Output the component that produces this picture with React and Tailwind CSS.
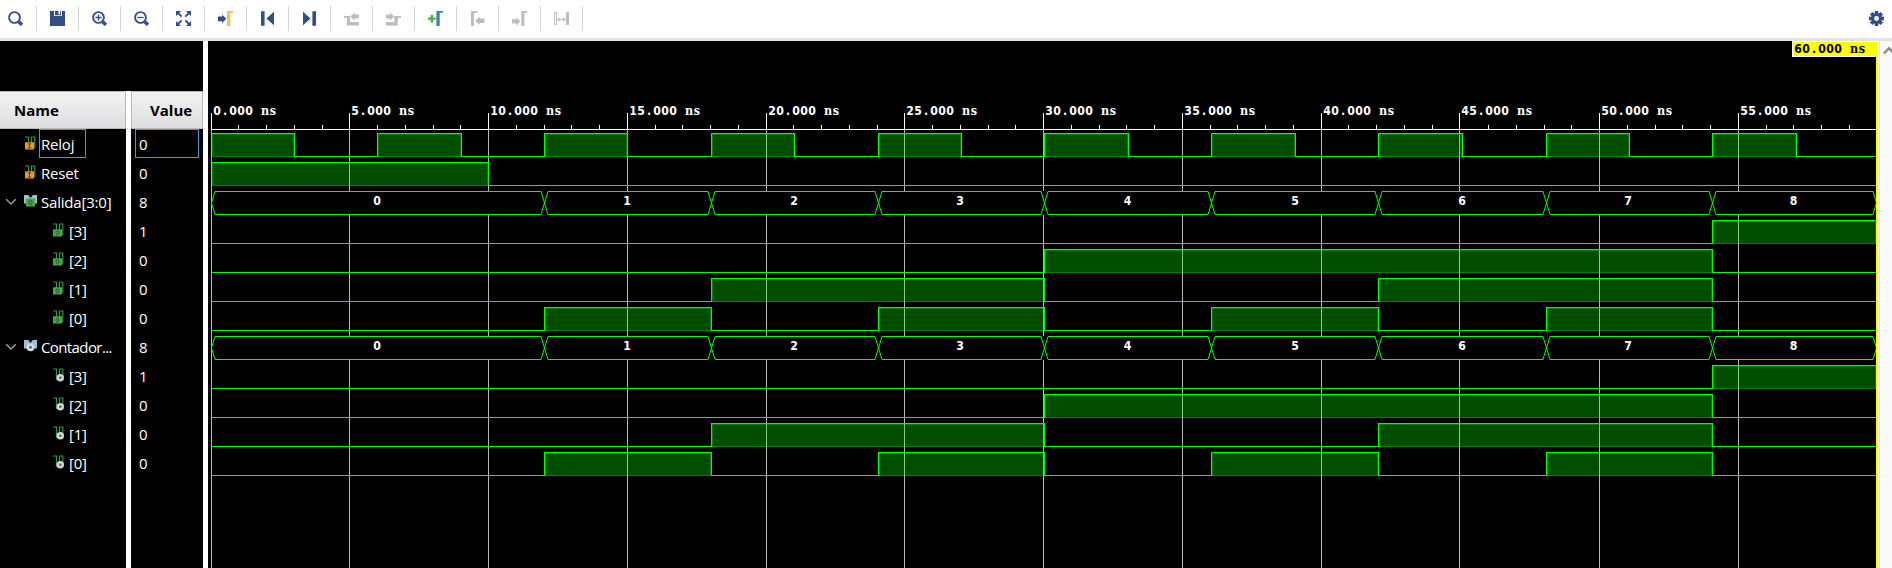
import React from "react";

const NAVY = "#314f85";
const GREY = "#bdbdbd";

const Magnifier = ({ children }) => (
  <>
    <circle cx="6.5" cy="6.5" r="5.4" fill="none" stroke={NAVY} strokeWidth="1.9" />
    <path d="M10.8 10.8L13.9 13.9" stroke={NAVY} strokeWidth="3.4" />
    {children}
  </>
);

const TOOL_ICONS = [
  <Magnifier />,
  <path fill={NAVY} fillRule="evenodd" d="M0 0H4V5H12V0H15V15H0Z M5 0H8.4V3.2H10.2V0H11V4.2H5Z" />,
  <Magnifier>
    <path d="M3.4 6.5H9.6M6.5 3.4V9.6" stroke={NAVY} strokeWidth="1.3" />
  </Magnifier>,
  <Magnifier>
    <path d="M3.4 6.5H9.6" stroke={NAVY} strokeWidth="1.3" />
  </Magnifier>,
  <>
    <path fill={NAVY} d="M0 0H5L0 5ZM15 0V5L10 0ZM0 15V10L5 15ZM15 15H10L15 10Z" />
    <path stroke={NAVY} strokeWidth="1.9" d="M1.5 1.5L5.6 5.6M13.5 1.5L9.4 5.6M1.5 13.5L5.6 9.4M13.5 13.5L9.4 9.4" />
  </>,
  <>
    <path fill={NAVY} d="M0 5.5H4V3.7L8.3 7.8L4 12V10.2H0Z" />
    <path fill="#e3c763" d="M9 0H15V2H12.4V15H9Z" />
  </>,
  <path fill={NAVY} d="M1 .3H4.6V14.7H1ZM14 .8V14.2L6.4 7.5Z" />,
  <path fill={NAVY} d="M1 .8L8.6 7.5L1 14.2ZM10.4 .3H14V14.7H10.4Z" />,
  <path fill={GREY} d="M0 5H6V11H15V14.5H2.8V6.8H0ZM6.3 5.5L10.5 1.4V3.4H15V7.6H10.5V9.5Z" />,
  <path fill={GREY} d="M0 11H8.3V5H15V6.8H11.8V14.5H0ZM0 3.4H4V1.4L8.2 5.5L4 9.5V7.6H0Z" />,
  <>
    <path fill="#45b04c" d="M2.7 3.8H5V6.5H7.7V8.7H5V11.5H2.7V8.7H0V6.5H2.7Z" />
    <path fill="#3a82b2" d="M8.4 0H15V1.8H11.7V15H8.4Z" />
  </>,
  <path fill={GREY} d="M1 0H7.2V1.7H4V15H1ZM5.3 9.8L9.7 5.6V7.6H14.4V12H9.7V14Z" />,
  <path fill={GREY} d="M9.3 0H15V1.7H12.4V15H9.3ZM0 8.2H4.2V6.2L8.4 10.3L4.2 14.5V12.5H0Z" />,
  <>
    <path fill="none" stroke={GREY} strokeWidth="1" d="M.5 1.5H2.5V13.5H.5Z" />
    <path fill={GREY} d="M12 1H15V14H12ZM3 8.5L5.6 6V8H9.2V6L11.8 8.5L9.2 11V9H5.6V11Z" />
  </>,
];

const GearIcon = () => (
  <svg width="15" height="15" viewBox="0 0 15 15">
    <g fill={NAVY}>
      {[0, 45, 90, 135].map((a) => (
        <rect key={a} x="5.7" y="0" width="3.6" height="15" transform={`rotate(${a} 7.5 7.5)`} />
      ))}
      <circle cx="7.5" cy="7.5" r="5.4" />
    </g>
    <circle cx="7.5" cy="7.5" r="2.4" fill="#fff" />
  </svg>
);

const Pulse = () => (
  <path d="M0 1H3.5V12M6.5 11V1H9.8V12" fill="none" stroke="#319447" strokeWidth="1.2" />
);

const SignalIcon = ({ kind }) => (
  <svg width="13" height="15" viewBox="0 0 13 15" className="block shrink-0">
    {kind === "input" && (
      <>
        <Pulse />
        <rect x="0" y="6.3" width="9" height="7.2" fill="#f0932b" />
        <path d="M2.8 7.8H6.2M4.5 7.8V12M2.8 12H6.2" stroke="#5f3b10" strokeWidth="1" />
      </>
    )}
    {kind === "output" && (
      <>
        <Pulse />
        <rect x="0" y="6.3" width="9" height="7.2" fill="#4ca64c" />
        <ellipse cx="4.5" cy="9.9" rx="1.5" ry="2.2" fill="none" stroke="#1f5a25" strokeWidth="1" />
      </>
    )}
    {kind === "reg" && (
      <>
        <Pulse />
        <circle cx="7.3" cy="9.8" r="3.7" fill="#d5d5d5" />
        <circle cx="7.3" cy="9.8" r="1.3" fill="#606060" />
      </>
    )}
    {kind === "outbus" && (
      <>
        <path d="M0 1H4.2L6.5 4L8.8 1H13V9.5H0Z" fill="#9bc0d8" />
        <rect x="1.8" y="4.5" width="9.4" height="8" rx="1" fill="#4ca64c" />
        <ellipse cx="6.5" cy="8.4" rx="1.5" ry="2.2" fill="none" stroke="#1f5a25" strokeWidth="1" />
      </>
    )}
    {kind === "regbus" && (
      <>
        <path d="M0 1H4.2L6.5 4L8.8 1H13V9.5H0Z" fill="#9bc0d8" />
        <circle cx="6.5" cy="8.3" r="3.9" fill="#d9d9d9" />
        <circle cx="6.5" cy="8.3" r="1.4" fill="#606060" />
      </>
    )}
  </svg>
);

const END = 1668;
const RELOJ = [[3, 86], [169, 253], [336, 419], [503, 586], [670, 753], [836, 920], [1003, 1087], [1170, 1254], [1338, 1421], [1504, 1588]];
const BIT3 = [[1504, END]];
const BIT2 = [[836, 1504]];
const BIT1 = [[503, 836], [1170, 1504]];
const BIT0 = [[336, 503], [670, 836], [1003, 1170], [1338, 1504]];
const BUS_EDGES = [3, 336, 503, 670, 836, 1003, 1170, 1338, 1504, END];
const BUS_CENTERS = [169, 419, 586, 752, 919.5, 1087, 1254, 1420, 1585.5];

const SIGNALS = [
  { name: "Reloj", value: "0", kind: "input", high: RELOJ, selected: true },
  { name: "Reset", value: "0", kind: "input", high: [[3, 280]] },
  { name: "Salida[3:0]", value: "8", kind: "outbus" },
  { name: "[3]", value: "1", kind: "output", high: BIT3, child: true },
  { name: "[2]", value: "0", kind: "output", high: BIT2, child: true },
  { name: "[1]", value: "0", kind: "output", high: BIT1, child: true },
  { name: "[0]", value: "0", kind: "output", high: BIT0, child: true },
  { name: "Contador...", value: "8", kind: "regbus" },
  { name: "[3]", value: "1", kind: "reg", high: BIT3, child: true },
  { name: "[2]", value: "0", kind: "reg", high: BIT2, child: true },
  { name: "[1]", value: "0", kind: "reg", high: BIT1, child: true },
  { name: "[0]", value: "0", kind: "reg", high: BIT0, child: true },
];

const MAJOR = [3, 141, 280, 419, 558, 696, 835, 974, 1113, 1251, 1391, 1530];
const MINOR = [
  30, 58, 86, 114, 169, 197, 225, 252, 308, 336, 363, 391, 447, 474, 502, 530, 585, 613, 641, 669, 724, 752, 780, 807,
  863, 891, 918, 946, 1002, 1029, 1057, 1085, 1140, 1168, 1196, 1224, 1280, 1308, 1336, 1363, 1419, 1447, 1474, 1502,
  1558, 1585, 1613, 1641,
];

// Glyphs sit on a fixed 8px pitch; the unit is set in a slab face, the digits in a plain one.
const MonoText = ({ x, y, fill = "#fff", value, unit = "" }) => {
  const cells = (text, from) => [...text].map((_, i) => x + 8 * (from + i)).join(" ");
  return (
    <text y={y} fill={fill} textAnchor="middle" xmlSpace="preserve" className="font-bold">
      <tspan
        x={cells(value, 0)}
        className="font-['DejaVu_Sans_Condensed','DejaVu_Sans',sans-serif] text-[12.2px]"
      >
        {value}
      </tspan>
      {unit && (
        <tspan
          x={cells(unit, value.length + 1)}
          className="font-['DejaVu_Serif_Condensed','DejaVu_Serif',serif] text-[12.5px]"
        >
          {unit}
        </tspan>
      )}
    </text>
  );
};

const BitTrace = ({ high, top }) => {
  const low = top + 23;
  const first = high[0][0];
  let d = first > 3 ? `M3 ${low + 0.5}H${first + 0.5}` : `M3 ${top + 0.5}`;
  high.forEach(([a, b], i) => {
    d += a > 3 ? `V${top + 0.5}` : "";
    d += b < END ? `H${b + 0.5}V${low + 0.5}` : `H${END}`;
    const next = high[i + 1];
    if (b < END) d += `H${next ? next[0] + 0.5 : END}`;
  });
  return (
    <g shapeRendering="crispEdges">
      {high.map(([a, b]) => (
        <g key={a}>
          <rect x={a + 1} y={top + 1} width={b - a - 1} height={23} fill="#00ff00" fillOpacity="0.3" />
          <rect x={a + 1.5} y={top + 1.5} width={b - a - 2} height={22} fill="none" stroke="#00ff00" strokeOpacity="0.3" />
        </g>
      ))}
      <path d={d} fill="none" stroke="#00ff00" />
    </g>
  );
};

const BusTrace = ({ top }) => {
  const t = top + 0.5;
  const m = top + 12;
  const b = top + 23.5;
  return (
    <g>
      <rect x="4" y={top} width={END - 4} height="24" fill="#000" />
      {BUS_EDGES.slice(0, -1).map((s, i) => {
        const l = s + 0.5;
        const r = BUS_EDGES[i + 1] + 0.5;
        return (
          <g key={s}>
            <path
              d={`M${l} ${m}L${l + 3.5} ${t}H${r - 3.5}L${r} ${m}L${r - 3.5} ${b}H${l + 3.5}Z`}
              fill="none"
              stroke="#00ff00"
            />
            <MonoText x={BUS_CENTERS[i]} y={top + 14} value={String(i)} />
          </g>
        );
      })}
    </g>
  );
};

const Waveform = () => (
  <svg width="1670" height="527" viewBox="0 0 1670 527" className="block bg-black">
    <g shapeRendering="crispEdges">
      {MAJOR.map((x) => (
        <rect key={x} x={x} y="89" width="1" height="438" fill="#b8b8b8" />
      ))}
      {MAJOR.map((x) => (
        <rect key={x} x={x} y="72" width="1" height="17" fill="#fff" />
      ))}
      {MINOR.map((x) => (
        <rect key={x} x={x} y="84" width="1" height="5" fill="#fff" />
      ))}
      <rect x="3" y="88" width="1665" height="1" fill="#fff" />
    </g>
    {MAJOR.map((x, i) => (
      <MonoText key={x} x={x + 6} y={74} value={`${i * 5}.000`} unit="ns" />
    ))}
    {SIGNALS.map((s, i) =>
      s.high ? <BitTrace key={i} high={s.high} top={92 + 29 * i} /> : <BusTrace key={i} top={92 + 29 * i} />
    )}
    <rect x="1668" y="0" width="2" height="527" fill="#ffff00" />
    <rect x="1584" y="0" width="86" height="16" fill="#fff" />
    <rect x="1585" y="1" width="84" height="14" fill="#ffff00" />
    <MonoText x={1590} y={12} fill="#000" value="60.000" unit="ns" />
  </svg>
);

const HEADER =
  "flex h-[38px] shrink-0 items-center border-t border-r border-b border-[#b9b9bb] bg-linear-to-b from-[#f3f3f3] to-[#dedee1] text-[15px] font-bold text-black";

export default function App() {
  return (
    <div className="flex h-[568px] w-[1892px] flex-col overflow-hidden bg-white font-['Open_Sans','Noto_Sans',sans-serif]">
      <div className="flex h-[41px] shrink-0 items-start border-b-3 border-[#e3e4e3]">
        {TOOL_ICONS.map((icon, i) => (
          <div
            key={i}
            className={
              "mt-[6px] flex h-[25px] shrink-0 items-center border-r border-[#d6d6d6] " +
              (i === 0 ? "w-[37px] pl-2" : "w-[42px] pl-[13px]")
            }
          >
            <svg width="15" height="15" viewBox="0 0 15 15">{icon}</svg>
          </div>
        ))}
        <div className="mt-[11px] mr-2 ml-auto">
          <GearIcon />
        </div>
      </div>

      <div className="flex min-h-0 flex-1">
        <div className="flex w-[203px] shrink-0 flex-col bg-black">
          <div className="h-[50px] shrink-0" />
          <div className="flex min-h-0 flex-1 bg-white">
            <div className="flex w-[126px] shrink-0 flex-col bg-black">
              <div className={HEADER + " pl-[14px]"}>Name</div>
              {SIGNALS.map((s, i) => (
                <div key={i} className={"flex h-[29px] shrink-0 items-center " + (s.child ? "pl-[53px]" : "pl-[5px]")}>
                  {!s.child && (
                    <svg width="12" height="8" viewBox="0 0 12 8" className="mr-[7px] shrink-0">
                      {!s.high && <path d="M1.2 1.2L6 6L10.8 1.2" fill="none" stroke="#9a9a9a" strokeWidth="1.5" />}
                    </svg>
                  )}
                  <span className={s.kind === "input" ? "ml-px" : ""}>
                    <SignalIcon kind={s.kind} />
                  </span>
                  <span
                    className={
                      "flex h-[29px] items-center border pt-px text-[15px] whitespace-nowrap text-white " +
                      (s.kind === "regbus" ? "tracking-[-0.6px] " : "tracking-[-0.2px] ") +
                      (s.selected ? "w-[47px] border-[#4c94d8] pl-px" : "border-transparent pl-px") +
                      (s.child ? " ml-px" : s.kind === "input" ? " ml-px" : " ml-[2px]")
                    }
                  >
                    {s.name}
                  </span>
                </div>
              ))}
            </div>
            <div className="ml-[5px] flex w-[72px] shrink-0 flex-col bg-black">
              <div className={HEADER + " border-l pl-[18px]"}>Value</div>
              {SIGNALS.map((s, i) => (
                <div
                  key={i}
                  className={
                    "ml-1 flex h-[29px] w-16 shrink-0 items-center border pt-px pl-[3px] text-[15px] text-white " +
                    (s.selected ? "border-[#4c94d8]" : "border-transparent")
                  }
                >
                  {s.value}
                </div>
              ))}
            </div>
          </div>
        </div>

        <div className="ml-[5px] shrink-0">
          <Waveform />
        </div>

        <div className="ml-px flex-1 overflow-hidden border-l border-[#e6e6e6] bg-[#fafafa]">
          <svg width="16" height="16" viewBox="0 0 16 16" className="block max-w-none">
            <path d="M3.8 12.5L9 7.3L14.2 12.5" fill="none" stroke="#8b8b8b" strokeWidth="2.4" />
          </svg>
        </div>
      </div>
    </div>
  );
}
